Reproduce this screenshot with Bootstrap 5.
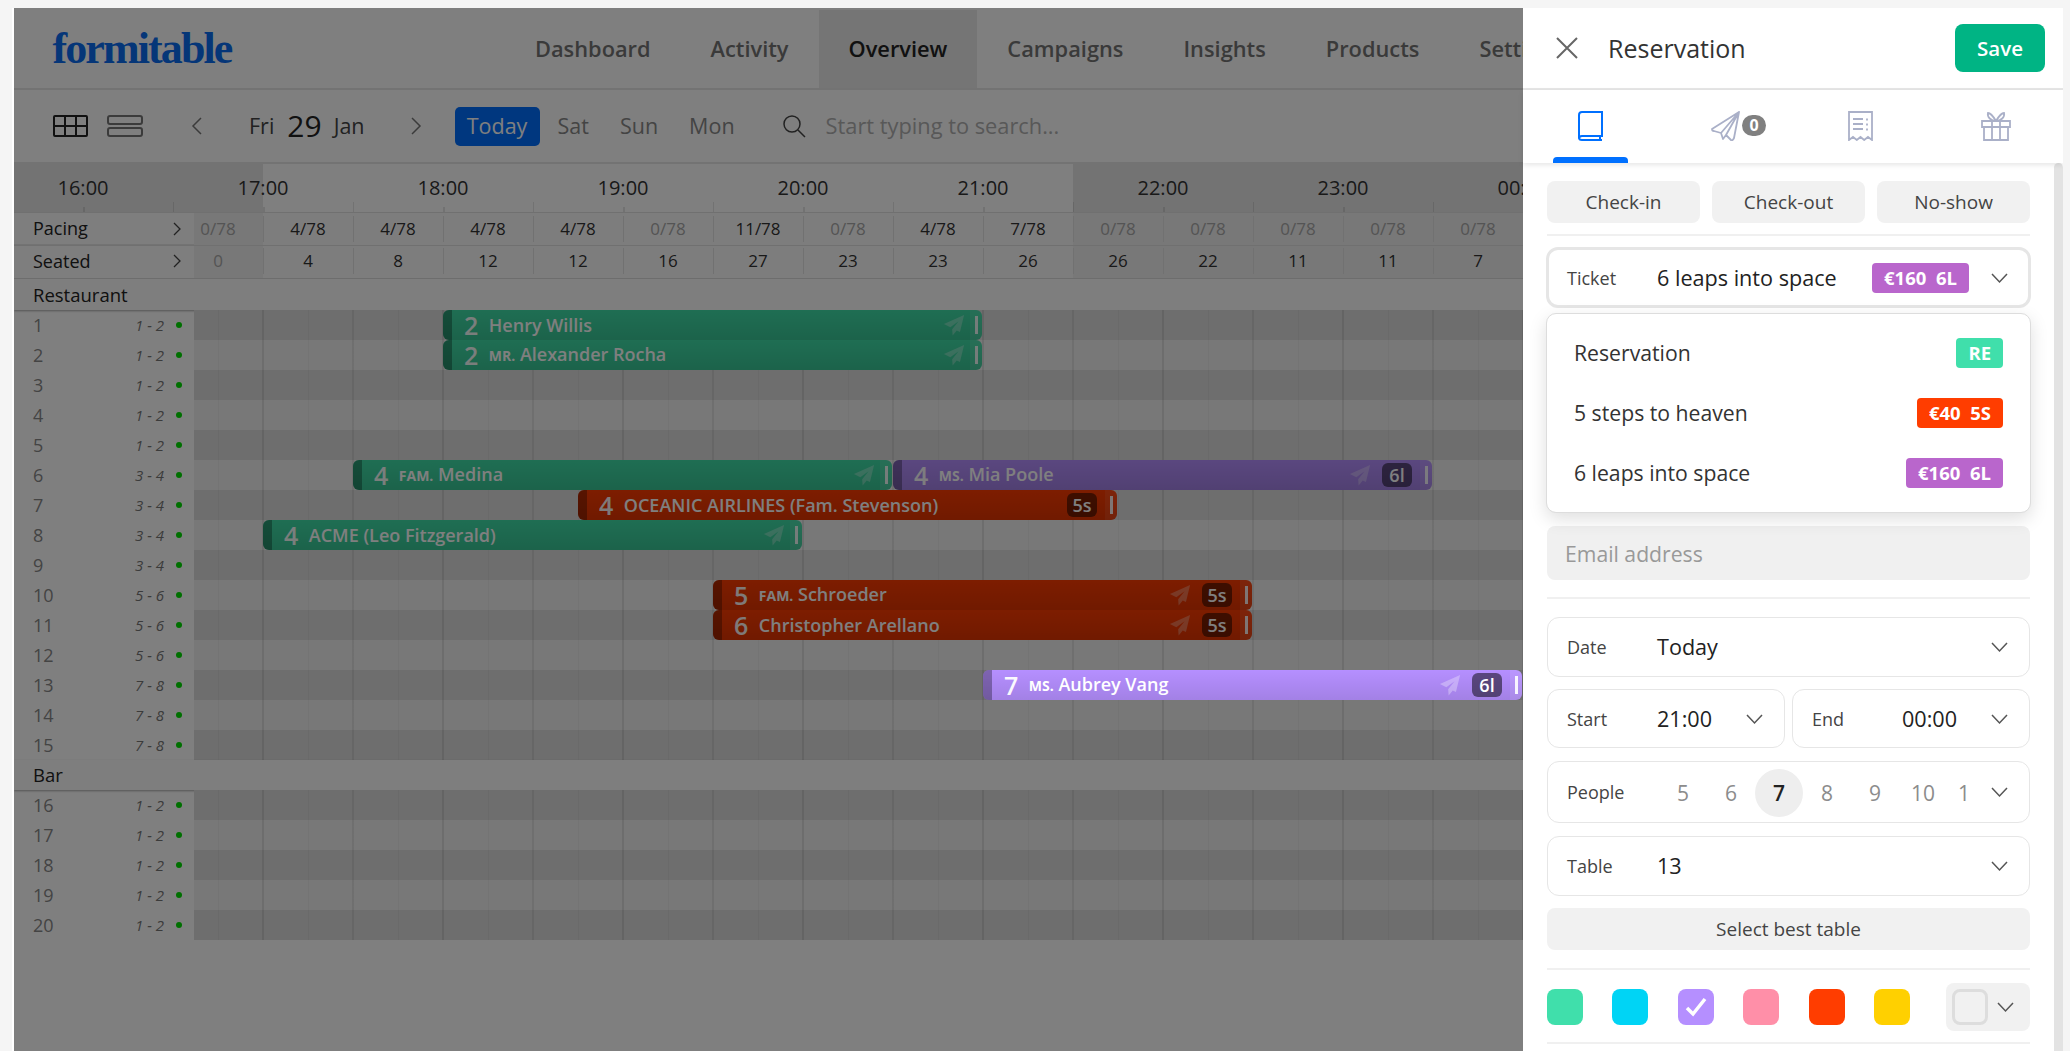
<!DOCTYPE html>
<html lang="en">
<head>
<meta charset="utf-8">
<title>Formitable</title>
<link rel="stylesheet" href="https://cdn.jsdelivr.net/npm/bootstrap@5.3.0/dist/css/bootstrap.min.css">
<style>
html,body{height:100%;overflow:hidden}
body{background:#f5f5f5;font-family:"Open Sans","Noto Sans",sans-serif;padding:8px 7px 0 14px;color:#333}
.frame{position:relative;background:#fff;height:1043px;overflow:hidden;box-shadow:-2px 0 0 #fff}
.scrim{position:absolute;inset:0;background:rgba(0,0,0,.5);z-index:10}
.topnav{height:82px;border-bottom:2px solid #e6e6e6;padding-left:38.500px;white-space:nowrap}
.brand-word{font-family:"Liberation Serif",serif;font-weight:700;font-size:44px;line-height:60px;padding-top:2px;color:#0a6cf0;width:452.500px;letter-spacing:-1.900px}
.topnav .nav-link{color:#757575;font-size:21.800px;font-weight:600;padding:0 30px;height:78px;line-height:78px;margin-top:2px}
.topnav .nav-link.active{background:#eaeaea;color:#222}
.toolbar{height:74px;border-bottom:2px solid #e6e6e6;padding-left:39px;white-space:nowrap}
.tool-list{margin-left:19px}
.tool-prev{margin-left:47px}
.tool-date{margin-left:46px}
.tool-next{margin-left:45px}
.tool-search{margin-left:16px}
.day-name{font-size:21.500px;color:#444}
.day-num{font-size:30px;color:#222;margin:0 12px 0 13px;line-height:1}
.btn-today{background:#006eff;color:#fff;font-size:21.500px;border:0;border-radius:5px;height:39px;width:85px;padding:0;margin:0 18px 0 32px}
.day-link{font-size:21.500px;color:#888;margin-right:31px}
.search-hint{font-size:21.800px;color:#b0b0b0;margin-left:20px}
.timehead{height:48px;font-size:20px;color:#333;
 background-image:linear-gradient(90deg,#e6e6e6 0 249px,transparent 249px 1059px,#e6e6e6 1059px);
 position:relative}
.timehead::after{content:"";position:absolute;left:0;right:0;bottom:0;height:10px;
 background:
  repeating-linear-gradient(90deg,transparent 0 69px,rgba(0,0,0,.1) 69px 71px,transparent 71px 180px) bottom/100% 5px no-repeat,
  repeating-linear-gradient(90deg,transparent 0 159px,rgba(0,0,0,.1) 159px 160px,transparent 160px 180px) bottom/100% 10px no-repeat}
.hour-cell{flex:0 0 180px;text-align:center;line-height:47px}
.hour-row{margin-left:-21px}
.statline{border-top:1px solid #e0e0e0;font-size:17px;color:#333;background:#fbfbfb}
.stat-a{height:33px}
.stat-b{height:34px;border-bottom:1px solid #e0e0e0}
.stat-label{flex:0 0 180px;padding:0 12px 0 19px;color:#222;background:#fcfcfc;font-size:18px}
.stat-a .stat-label{border-bottom:1px solid #e6e6e6}
.stat-b .stat-track,.stat-b .stat-label{padding-bottom:2px}
.stat-track{background-image:linear-gradient(90deg,#f0f0f0 0 69px,transparent 69px 879px,#f0f0f0 879px)}
.stat-cell{flex:0 0 90px;text-align:center;box-shadow:1px 0 0 #e2e2e2}
.stat-cell.first-cell{flex-basis:69px;padding-right:21px}
.stat-cell.none{color:#a8a8a8}
.zone-head{height:31px;font-size:18.500px;line-height:31px;padding-left:19px;color:#222;position:relative;box-shadow:0 1px 2px rgba(0,0,0,.35);background:#fcfcfc}
.zone-head.zone-short{height:30px;line-height:30px}
.desk{height:30px}
.desk-label{flex:0 0 180px;padding:0 12px 0 19px;font-size:18px;color:#888}
.desk-label em{font-size:15px;color:#777;margin-right:12px}
.status-dot{width:6px;height:6px;border-radius:50%;background:#00e000}
.desk-track{position:relative;flex:1 1 auto;
 background-image:repeating-linear-gradient(90deg,transparent 0 24px,rgba(0,0,0,.03) 24px 25px,transparent 25px 68px,rgba(0,0,0,.09) 68px 70px,transparent 70px 114px,rgba(0,0,0,.03) 114px 115px,transparent 115px 158px,rgba(0,0,0,.07) 158px 160px,transparent 160px 180px)}
.desk:nth-child(odd) .desk-track{background-color:#dcdcdc}
.desk:nth-child(even) .desk-track{background-color:#f0f0f0}
.booking{position:absolute;top:0;height:30px;border-radius:6px;color:#fff;display:flex;align-items:center;background-image:linear-gradient(rgba(0,0,0,0),rgba(0,0,0,.1));white-space:nowrap}
.booking.mint{background-color:#3edca6}
.booking.flame{background-color:#fb3a00}
.booking.violet{background-color:#b58fff}
.booking.lifted{z-index:11}
.grip-l{flex:0 0 9px;align-self:stretch;background:rgba(0,0,0,.3);border-radius:6px 0 0 6px}
.grip-r{flex:0 0 12px;align-self:stretch;background:rgba(255,255,255,.08);position:relative;border-radius:0 6px 6px 0}
.grip-r::after{content:"";position:absolute;left:5px;top:6px;width:2.500px;height:18px;background:#fff;opacity:.9}
.b-num{font-size:25px;font-weight:600;margin:0 10.500px 0 12px;line-height:30px;opacity:.95}
.b-name{font-size:18px;font-weight:600;line-height:30px}
.b-name small{font-size:14px;font-weight:700}
.b-plane{margin-left:auto;margin-right:5px;width:22px;height:22px;flex:none}
.b-plane path{fill:#fff;opacity:.3}
.b-tag{background:rgba(0,0,0,.5);font-size:18px;font-weight:600;border-radius:6px;height:24px;line-height:24px;text-align:center;width:30px;margin-left:6px;margin-right:8px;flex:none}
.b-tag.tag-auto{margin-left:auto}

.sidepanel{position:absolute;top:0;right:0;bottom:0;width:540px;background:#fff;z-index:20}
.side-head{height:82px;border-bottom:2px solid #e6e6e6;padding:0 18px 0 33px}
.side-title{font-size:25px;color:#333;margin:0 0 0 30px;font-weight:400}
.btn-keep{background:#00b484;color:#fff;font-size:20.500px;font-weight:600;border:0;border-radius:8px;width:90px;height:48px;padding:0}
.side-tabs{height:73px;box-shadow:0 2px 5px rgba(0,0,0,.1);position:relative;z-index:2}
.side-tab{height:73px;position:relative}
.side-tab svg{margin-top:21px}
.side-tab.on::after{content:"";position:absolute;left:30px;width:75px;bottom:0;height:6px;background:#0070ff;border-radius:4px 4px 0 0}
.side-count{position:absolute;left:84px;top:25px;height:21px;width:24px;border-radius:11px;background:#808080;color:#fff;font-size:16px;font-weight:700;padding:0;line-height:21px}
.side-scroll{position:relative;height:888px;padding:18px 33px 0 24px;overflow:hidden}
.side-scroll::after{content:"";position:absolute;right:0;top:0;bottom:0;width:9px;background:#e3e3e3;border-radius:5px 5px 0 0}
.action-row{gap:12px}
.btn-soft{background:#f1f1f1;color:#444;border:0;border-radius:8px;font-size:19px;height:42px;padding:0}
.btn-soft.best{margin-top:12px}
.rule{height:2px;background:#f0f0f0;border:0;opacity:1}
.rule.r1{margin:11px 0}
.rule.r2{margin:17px 0 18px}
.rule.r3{margin:18px 0 13px}
.rule.r4{margin:11px 0 0}
.field{border:1.500px solid #e6e6e6;border-radius:12px;background:#fff;padding:1px 21px 0 19px}
.field.hi{border-width:3px;margin:0 -1px;padding-left:18px;padding-right:20px;height:61px}
.fh60{height:60px}
.fh59{height:59px}
.fh62{height:62px}
.mt13{margin-top:13px}
.mt12{margin-top:12px}
.time-pair{gap:7px;margin-top:12px}
.field-label{flex:0 0 90px;font-size:18px;color:#444}
.field-value{font-size:21.600px;font-weight:500;color:#222}
.tag-box{font-size:18.500px;font-weight:700;color:#fff;border-radius:4px;height:30px;line-height:30px;padding:0 12px;white-space:pre}
.field .tag-box{margin-right:22px}
.tg-purple{background:#b966cc}
.tg-red{background:#ff3d00}
.tg-mint{background:#40dfab}
.pick-menu{position:relative;z-index:3;display:block;height:200px;margin:5px -1px 13px;padding:9px 0;border:1px solid #ddd;border-radius:10px;box-shadow:0 6px 18px rgba(0,0,0,.13);--bs-dropdown-min-width:auto}
.pick-menu .dropdown-item{height:60px;font-size:21.200px;color:#333;padding:0 27px}
.email-box{height:54px;background:#f0f0f0;border:0;border-radius:8px;font-size:21.200px;padding:0 18px}
.email-box::placeholder{color:#999}
.seat-num{flex:0 0 48px;height:48px;line-height:48px;text-align:center;font-size:21px;color:#8c8c8c;border-radius:50%}
.seat-num.on{background:#eee;color:#222;font-weight:600}
.seat-num.partial{flex-basis:34px}
.seat-list{margin-left:2px;flex:1 1 auto;overflow:hidden;white-space:nowrap}
.chev{flex:none}
.chev.tight{margin-left:3px}
.swatch{width:36px;height:36px;border-radius:8px;flex:none}
.sw-mint{background:#40dfab}.sw-cyan{background:#00d4f5}.sw-violet{background:#b58fff}.sw-pink{background:#ff8fa8}.sw-red{background:#ff3d00}.sw-gold{background:#ffd000}
.swatch-drop{width:84px;height:48px;background:#f1f1f1;border-radius:8px;padding:0 16px 0 6px;margin-left:36px}
.swatch-empty{width:36px;height:36px;border:3px solid #ddd;border-radius:8px}
</style>
</head>
<body>
<div class="frame">
  <div class="topnav d-flex align-items-center">
    <div class="brand-word">formitable</div>
    <ul class="nav flex-nowrap align-self-start">
      <li class="nav-item"><a class="nav-link" href="#">Dashboard</a></li>
      <li class="nav-item"><a class="nav-link" href="#">Activity</a></li>
      <li class="nav-item"><a class="nav-link active" href="#">Overview</a></li>
      <li class="nav-item"><a class="nav-link" href="#">Campaigns</a></li>
      <li class="nav-item"><a class="nav-link" href="#">Insights</a></li>
      <li class="nav-item"><a class="nav-link" href="#">Products</a></li>
      <li class="nav-item"><a class="nav-link" href="#">Settings</a></li>
    </ul>
  </div>

  <div class="toolbar d-flex align-items-center">
    <svg width="35" height="22" viewBox="0 0 35 22" fill="none" stroke="#222" stroke-width="2"><rect x="1" y="1" width="33" height="20" rx="1"/><path d="M12 1v20M23 1v20M1 11h33"/></svg>
    <svg class="tool-list" width="36" height="22" viewBox="0 0 36 22" fill="none" stroke="#777" stroke-width="2"><rect x="1" y="1" width="34" height="8" rx="2"/><rect x="1" y="13" width="34" height="8" rx="2"/></svg>
    <svg class="tool-prev" width="13" height="18" viewBox="0 0 13 18" fill="none" stroke="#777" stroke-width="1.5"><path d="M11 1 3 9l8 8"/></svg>
    <div class="tool-date d-flex align-items-center">
      <span class="day-name">Fri</span><span class="day-num">29</span><span class="day-name">Jan</span>
    </div>
    <svg class="tool-next" width="13" height="18" viewBox="0 0 13 18" fill="none" stroke="#777" stroke-width="1.5"><path d="m2 1 8 8-8 8"/></svg>
    <button class="btn btn-today" type="button">Today</button>
    <span class="day-link">Sat</span><span class="day-link">Sun</span><span class="day-link">Mon</span>
    <svg class="tool-search" width="24" height="24" viewBox="0 0 24 24" fill="none" stroke="#444" stroke-width="1.5"><circle cx="10" cy="10" r="8"/><path d="m16 16 7 7"/></svg>
    <span class="search-hint">Start typing to search...</span>
  </div>

  <div class="timehead">
    <div class="hour-row d-flex flex-nowrap">
      <div class="hour-cell">16:00</div><div class="hour-cell">17:00</div><div class="hour-cell">18:00</div><div class="hour-cell">19:00</div><div class="hour-cell">20:00</div><div class="hour-cell">21:00</div><div class="hour-cell">22:00</div><div class="hour-cell">23:00</div><div class="hour-cell">00:00</div>
    </div>
  </div>

  <div class="statline stat-a d-flex align-items-stretch">
    <div class="stat-label d-flex justify-content-between align-items-center">Pacing<svg width="9" height="14" viewBox="0 0 9 14" fill="none" stroke="#444" stroke-width="1.3"><path d="m1 1 6 6-6 6"/></svg></div>
    <div class="stat-track d-flex flex-nowrap align-items-center flex-grow-1">
      <div class="stat-cell first-cell none">0/78</div><div class="stat-cell">4/78</div><div class="stat-cell">4/78</div><div class="stat-cell">4/78</div><div class="stat-cell">4/78</div><div class="stat-cell none">0/78</div><div class="stat-cell">11/78</div><div class="stat-cell none">0/78</div><div class="stat-cell">4/78</div><div class="stat-cell">7/78</div><div class="stat-cell none">0/78</div><div class="stat-cell none">0/78</div><div class="stat-cell none">0/78</div><div class="stat-cell none">0/78</div><div class="stat-cell none">0/78</div>
    </div>
  </div>
  <div class="statline stat-b d-flex align-items-stretch">
    <div class="stat-label d-flex justify-content-between align-items-center">Seated<svg width="9" height="14" viewBox="0 0 9 14" fill="none" stroke="#444" stroke-width="1.3"><path d="m1 1 6 6-6 6"/></svg></div>
    <div class="stat-track d-flex flex-nowrap align-items-center flex-grow-1">
      <div class="stat-cell first-cell none">0</div><div class="stat-cell">4</div><div class="stat-cell">8</div><div class="stat-cell">12</div><div class="stat-cell">12</div><div class="stat-cell">16</div><div class="stat-cell">27</div><div class="stat-cell">23</div><div class="stat-cell">23</div><div class="stat-cell">26</div><div class="stat-cell">26</div><div class="stat-cell">22</div><div class="stat-cell">11</div><div class="stat-cell">11</div><div class="stat-cell">7</div>
    </div>
  </div>

  <div class="zone-head">Restaurant</div>
  <div class="zone-rows">
    <div class="desk d-flex"><div class="desk-label d-flex align-items-center"><span class="flex-grow-1">1</span><em>1 - 2</em><i class="status-dot"></i></div><div class="desk-track">
      <div class="booking mint" style="left:249px;width:539px"><span class="grip-l"></span><span class="b-num">2</span><span class="b-name">Henry Willis</span><svg class="b-plane" viewBox="0 0 24 24"><path d="M23 1 1 11l7 3.500L17 8l-7 8.500.500 7 4.500-5.500 3.500 1.500z"/></svg><span class="grip-r"></span></div></div></div>
    <div class="desk d-flex"><div class="desk-label d-flex align-items-center"><span class="flex-grow-1">2</span><em>1 - 2</em><i class="status-dot"></i></div><div class="desk-track">
      <div class="booking mint" style="left:249px;width:539px"><span class="grip-l"></span><span class="b-num">2</span><span class="b-name"><small>MR.</small> Alexander Rocha</span><svg class="b-plane" viewBox="0 0 24 24"><path d="M23 1 1 11l7 3.500L17 8l-7 8.500.500 7 4.500-5.500 3.500 1.500z"/></svg><span class="grip-r"></span></div></div></div>
    <div class="desk d-flex"><div class="desk-label d-flex align-items-center"><span class="flex-grow-1">3</span><em>1 - 2</em><i class="status-dot"></i></div><div class="desk-track"></div></div>
    <div class="desk d-flex"><div class="desk-label d-flex align-items-center"><span class="flex-grow-1">4</span><em>1 - 2</em><i class="status-dot"></i></div><div class="desk-track"></div></div>
    <div class="desk d-flex"><div class="desk-label d-flex align-items-center"><span class="flex-grow-1">5</span><em>1 - 2</em><i class="status-dot"></i></div><div class="desk-track"></div></div>
    <div class="desk d-flex"><div class="desk-label d-flex align-items-center"><span class="flex-grow-1">6</span><em>3 - 4</em><i class="status-dot"></i></div><div class="desk-track">
      <div class="booking mint" style="left:159px;width:539px"><span class="grip-l"></span><span class="b-num">4</span><span class="b-name"><small>FAM.</small> Medina</span><svg class="b-plane" viewBox="0 0 24 24"><path d="M23 1 1 11l7 3.500L17 8l-7 8.500.500 7 4.500-5.500 3.500 1.500z"/></svg><span class="grip-r"></span></div>
      <div class="booking violet" style="left:699px;width:539px"><span class="grip-l"></span><span class="b-num">4</span><span class="b-name"><small>MS.</small> Mia Poole</span><svg class="b-plane" viewBox="0 0 24 24"><path d="M23 1 1 11l7 3.500L17 8l-7 8.500.500 7 4.500-5.500 3.500 1.500z"/></svg><span class="b-tag">6l</span><span class="grip-r"></span></div></div></div>
    <div class="desk d-flex"><div class="desk-label d-flex align-items-center"><span class="flex-grow-1">7</span><em>3 - 4</em><i class="status-dot"></i></div><div class="desk-track">
      <div class="booking flame" style="left:384px;width:539px"><span class="grip-l"></span><span class="b-num">4</span><span class="b-name">OCEANIC AIRLINES (Fam. Stevenson)</span><span class="b-tag tag-auto">5s</span><span class="grip-r"></span></div></div></div>
    <div class="desk d-flex"><div class="desk-label d-flex align-items-center"><span class="flex-grow-1">8</span><em>3 - 4</em><i class="status-dot"></i></div><div class="desk-track">
      <div class="booking mint" style="left:69px;width:539px"><span class="grip-l"></span><span class="b-num">4</span><span class="b-name">ACME (Leo Fitzgerald)</span><svg class="b-plane" viewBox="0 0 24 24"><path d="M23 1 1 11l7 3.500L17 8l-7 8.500.500 7 4.500-5.500 3.500 1.500z"/></svg><span class="grip-r"></span></div></div></div>
    <div class="desk d-flex"><div class="desk-label d-flex align-items-center"><span class="flex-grow-1">9</span><em>3 - 4</em><i class="status-dot"></i></div><div class="desk-track"></div></div>
    <div class="desk d-flex"><div class="desk-label d-flex align-items-center"><span class="flex-grow-1">10</span><em>5 - 6</em><i class="status-dot"></i></div><div class="desk-track">
      <div class="booking flame" style="left:519px;width:539px"><span class="grip-l"></span><span class="b-num">5</span><span class="b-name"><small>FAM.</small> Schroeder</span><svg class="b-plane" viewBox="0 0 24 24"><path d="M23 1 1 11l7 3.500L17 8l-7 8.500.500 7 4.500-5.500 3.500 1.500z"/></svg><span class="b-tag">5s</span><span class="grip-r"></span></div></div></div>
    <div class="desk d-flex"><div class="desk-label d-flex align-items-center"><span class="flex-grow-1">11</span><em>5 - 6</em><i class="status-dot"></i></div><div class="desk-track">
      <div class="booking flame" style="left:519px;width:539px"><span class="grip-l"></span><span class="b-num">6</span><span class="b-name">Christopher Arellano</span><svg class="b-plane" viewBox="0 0 24 24"><path d="M23 1 1 11l7 3.500L17 8l-7 8.500.500 7 4.500-5.500 3.500 1.500z"/></svg><span class="b-tag">5s</span><span class="grip-r"></span></div></div></div>
    <div class="desk d-flex"><div class="desk-label d-flex align-items-center"><span class="flex-grow-1">12</span><em>5 - 6</em><i class="status-dot"></i></div><div class="desk-track"></div></div>
    <div class="desk d-flex"><div class="desk-label d-flex align-items-center"><span class="flex-grow-1">13</span><em>7 - 8</em><i class="status-dot"></i></div><div class="desk-track">
      <div class="booking violet lifted" style="left:789px;width:539px"><span class="grip-l"></span><span class="b-num">7</span><span class="b-name"><small>MS.</small> Aubrey Vang</span><svg class="b-plane" viewBox="0 0 24 24"><path d="M23 1 1 11l7 3.500L17 8l-7 8.500.500 7 4.500-5.500 3.500 1.500z"/></svg><span class="b-tag">6l</span><span class="grip-r"></span></div></div></div>
    <div class="desk d-flex"><div class="desk-label d-flex align-items-center"><span class="flex-grow-1">14</span><em>7 - 8</em><i class="status-dot"></i></div><div class="desk-track"></div></div>
    <div class="desk d-flex"><div class="desk-label d-flex align-items-center"><span class="flex-grow-1">15</span><em>7 - 8</em><i class="status-dot"></i></div><div class="desk-track"></div></div>
  </div>
  <div class="zone-head zone-short">Bar</div>
  <div class="zone-rows">
    <div class="desk d-flex"><div class="desk-label d-flex align-items-center"><span class="flex-grow-1">16</span><em>1 - 2</em><i class="status-dot"></i></div><div class="desk-track"></div></div>
    <div class="desk d-flex"><div class="desk-label d-flex align-items-center"><span class="flex-grow-1">17</span><em>1 - 2</em><i class="status-dot"></i></div><div class="desk-track"></div></div>
    <div class="desk d-flex"><div class="desk-label d-flex align-items-center"><span class="flex-grow-1">18</span><em>1 - 2</em><i class="status-dot"></i></div><div class="desk-track"></div></div>
    <div class="desk d-flex"><div class="desk-label d-flex align-items-center"><span class="flex-grow-1">19</span><em>1 - 2</em><i class="status-dot"></i></div><div class="desk-track"></div></div>
    <div class="desk d-flex"><div class="desk-label d-flex align-items-center"><span class="flex-grow-1">20</span><em>1 - 2</em><i class="status-dot"></i></div><div class="desk-track"></div></div>
  </div>

  <div class="scrim"></div>

  <aside class="sidepanel">
    <div class="side-head d-flex align-items-center">
      <svg width="22" height="22" viewBox="0 0 22 22" fill="none" stroke="#666" stroke-width="2"><path d="m1 1 20 20M21 1 1 21"/></svg>
      <h1 class="side-title flex-grow-1">Reservation</h1>
      <button class="btn btn-keep" type="button">Save</button>
    </div>
    <div class="side-tabs row g-0">
      <div class="col-3 side-tab on d-flex justify-content-center align-items-start">
        <svg width="25" height="30" viewBox="0 0 25 30" fill="none" stroke="#0070ff" stroke-width="2"><path d="M4 1h20v24H4c-2 0-3 1-3 2.500V4c0-2 1-3 3-3zM1 26.500C1 28 2 29 4 29h20M22 25v4"/></svg>
      </div>
      <div class="col-3 side-tab d-flex justify-content-center align-items-start">
        <svg width="30" height="30" viewBox="0 0 30 30" fill="none" stroke="#aab0c8" stroke-width="1.800" stroke-linejoin="round"><path d="M28 1 1 18c0 1 1 2 2 2l7 2L28 1 15 24l5 5c1 1 2 0 3-2zM10 22l2 6 3-4"/></svg>
        <span class="badge side-count">0</span>
      </div>
      <div class="col-3 side-tab d-flex justify-content-center align-items-start">
        <svg width="25" height="30" viewBox="0 0 25 30" fill="none" stroke="#aab0c8" stroke-width="1.800"><path d="M1 1h23v28l-4-3-3.800 3-3.700-3-3.700 3-3.800-3-4 3zM5 8h10M5 13h10M5 18h10M19 7.500v2M19 12.500v2M19 17.500v2"/></svg>
      </div>
      <div class="col-3 side-tab d-flex justify-content-center align-items-start">
        <svg width="30" height="30" viewBox="0 0 30 30" fill="none" stroke="#aab0c8" stroke-width="1.800"><path d="M1 10h28v6H1zM3 16h24v13H3zM11 10v19M19 10v19M15 10C12 5 9 2 7 2c-1 4 3 8 8 8zM15 10c3-5 6-8 8-8 1 4-3 8-8 8z"/></svg>
      </div>
    </div>
    <div class="side-scroll">
      <div class="action-row d-flex">
        <button class="btn btn-soft flex-fill w-100" type="button">Check-in</button>
        <button class="btn btn-soft flex-fill w-100" type="button">Check-out</button>
        <button class="btn btn-soft flex-fill w-100" type="button">No-show</button>
      </div>
      <hr class="rule r1">
      <div class="field hi d-flex align-items-center">
        <span class="field-label">Ticket</span>
        <span class="field-value flex-grow-1">6 leaps into space</span>
        <span class="badge tag-box tg-purple">€160  6L</span>
        <svg class="chev" width="17" height="11" viewBox="0 0 17 11" fill="none" stroke="#555" stroke-width="1.500"><path d="m1 1 7.500 8L16 1"/></svg>
      </div>
      <div class="dropdown-menu pick-menu">
        <a class="dropdown-item d-flex justify-content-between align-items-center" href="#">Reservation<span class="badge tag-box tg-mint">RE</span></a>
        <a class="dropdown-item d-flex justify-content-between align-items-center" href="#">5 steps to heaven<span class="badge tag-box tg-red">€40  5S</span></a>
        <a class="dropdown-item d-flex justify-content-between align-items-center" href="#">6 leaps into space<span class="badge tag-box tg-purple">€160  6L</span></a>
      </div>
      <input class="form-control email-box" type="text" placeholder="Email address">
      <hr class="rule r2">
      <div class="field fh60 d-flex align-items-center">
        <span class="field-label">Date</span>
        <span class="field-value flex-grow-1">Today</span>
        <svg class="chev" width="17" height="11" viewBox="0 0 17 11" fill="none" stroke="#555" stroke-width="1.500"><path d="m1 1 7.500 8L16 1"/></svg>
      </div>
      <div class="time-pair d-flex">
        <div class="field fh59 d-flex align-items-center w-50">
          <span class="field-label">Start</span>
          <span class="field-value flex-grow-1">21:00</span>
          <svg class="chev" width="17" height="11" viewBox="0 0 17 11" fill="none" stroke="#555" stroke-width="1.500"><path d="m1 1 7.500 8L16 1"/></svg>
        </div>
        <div class="field fh59 d-flex align-items-center w-50">
          <span class="field-label">End</span>
          <span class="field-value flex-grow-1">00:00</span>
          <svg class="chev" width="17" height="11" viewBox="0 0 17 11" fill="none" stroke="#555" stroke-width="1.500"><path d="m1 1 7.500 8L16 1"/></svg>
        </div>
      </div>
      <div class="field fh62 mt13 d-flex align-items-center">
        <span class="field-label">People</span>
        <div class="seat-list d-flex">
          <span class="seat-num">5</span><span class="seat-num">6</span><span class="seat-num on">7</span><span class="seat-num">8</span><span class="seat-num">9</span><span class="seat-num">10</span><span class="seat-num partial">1</span>
        </div>
        <svg class="chev tight" width="17" height="11" viewBox="0 0 17 11" fill="none" stroke="#555" stroke-width="1.500"><path d="m1 1 7.500 8L16 1"/></svg>
      </div>
      <div class="field fh60 mt13 d-flex align-items-center">
        <span class="field-label">Table</span>
        <span class="field-value flex-grow-1">13</span>
        <svg class="chev" width="17" height="11" viewBox="0 0 17 11" fill="none" stroke="#555" stroke-width="1.500"><path d="m1 1 7.500 8L16 1"/></svg>
      </div>
      <button class="btn btn-soft best w-100" type="button">Select best table</button>
      <hr class="rule r3">
      <div class="d-flex align-items-center">
        <div class="d-flex flex-grow-1 justify-content-between">
          <span class="swatch sw-mint"></span><span class="swatch sw-cyan"></span>
          <span class="swatch sw-violet d-flex align-items-center justify-content-center"><svg width="22" height="20" viewBox="0 0 22 20" fill="none" stroke="#fff" stroke-width="3.500"><path d="m2 11 6 6L20 2"/></svg></span>
          <span class="swatch sw-pink"></span><span class="swatch sw-red"></span><span class="swatch sw-gold"></span>
        </div>
        <div class="swatch-drop d-flex align-items-center justify-content-between">
          <span class="swatch-empty"></span>
          <svg class="chev" width="17" height="11" viewBox="0 0 17 11" fill="none" stroke="#555" stroke-width="1.500"><path d="m1 1 7.500 8L16 1"/></svg>
        </div>
      </div>
      <hr class="rule r4">
    </div>
  </aside>
</div>
<script src="https://cdn.jsdelivr.net/npm/bootstrap@5.3.0/dist/js/bootstrap.bundle.min.js"></script>
</body>
</html>
